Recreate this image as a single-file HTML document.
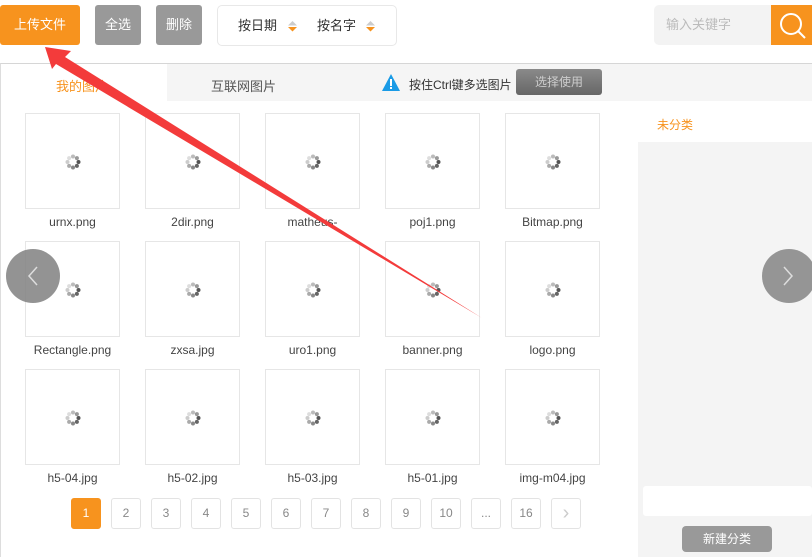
<!DOCTYPE html>
<html><head><meta charset="utf-8"><style>
*{margin:0;padding:0;box-sizing:border-box}
body{width:812px;height:557px;overflow:hidden;background:#fff;font-family:"Liberation Sans","Noto Sans CJK SC",sans-serif;position:relative;font-size:13px;color:#333}
.a{position:absolute}
.btn{position:absolute;top:5px;height:40px;border-radius:3px;color:#fff;font-size:13px;line-height:40px;text-align:center}
.box{position:absolute;width:95px;height:96px;border:1px solid #e6e6e6}
.lbl{position:absolute;width:95px;text-align:center;font-size:12px;color:#444}
.sp{position:absolute;left:39px;top:40px;width:16px;height:16px}
.pg{position:absolute;top:498px;width:30px;height:31px;border:1px solid #e3e3e3;border-radius:3px;text-align:center;line-height:29px;font-size:12px;color:#888}
</style></head><body>
<div class="btn" style="left:0;width:80px;background:#f7931e">上传文件</div>
<div class="btn" style="left:95px;width:46px;background:#999">全选</div>
<div class="btn" style="left:156px;width:46px;background:#999">删除</div>
<div class="a" style="left:217px;top:5px;width:180px;height:41px;border:1px solid #e8e8e8;border-radius:5px;font-size:13px;line-height:40px;color:#333">
<span class="a" style="left:20px">按日期</span>
<svg class="a" style="left:70px;top:15px" width="9" height="11"><polygon points="4.5,0 9,4.5 0,4.5" fill="#ccc"/><polygon points="0,6 9,6 4.5,10.5" fill="#f7931e"/></svg>
<span class="a" style="left:99px">按名字</span>
<svg class="a" style="left:148px;top:15px" width="9" height="11"><polygon points="4.5,0 9,4.5 0,4.5" fill="#ccc"/><polygon points="0,6 9,6 4.5,10.5" fill="#f7931e"/></svg></div>
<div class="a" style="left:654px;top:5px;width:118px;height:40px;background:#f3f3f3;border-radius:5px 0 0 5px;color:#bbb;line-height:40px;padding-left:12px">输入关键字</div>
<div class="a" style="left:771px;top:5px;width:41px;height:40px;background:#f7931e">
<svg width="41" height="40"><circle cx="20" cy="19" r="10" fill="none" stroke="#fff" stroke-width="2"/><line x1="27" y1="26" x2="34" y2="33" stroke="#fff" stroke-width="2"/></svg></div>
<div class="a" style="left:0;top:63px;width:812px;height:494px;border-top:1px solid #d6d6d6;border-left:1px solid #ddd"></div>
<div class="a" style="left:167px;top:64px;width:645px;height:37px;background:#f5f5f5"></div>
<div class="a" style="left:56px;top:76px;color:#f7931e">我的图片</div>
<div class="a" style="left:211px;top:76px;color:#555">互联网图片</div>
<svg class="a" style="left:381px;top:73px" width="20" height="20"><polygon points="10,1 19,18 1,18" fill="#1a9be6"/><rect x="9" y="6" width="2" height="7" fill="#fff"/><rect x="9" y="14" width="2" height="2" fill="#fff"/></svg>
<div class="a" style="left:409px;top:76px;font-size:12px;color:#333">按住Ctrl键多选图片</div>
<div class="a" style="left:516px;top:69px;width:86px;height:26px;background:linear-gradient(#8a8a8a,#666);border-radius:3px;color:#ccc;text-align:center;line-height:26px;font-size:12px">选择使用</div>
<div class="a" style="left:657px;top:116px;color:#f7931e;font-size:12px">未分类</div>
<div class="a" style="left:638px;top:142px;width:174px;height:415px;background:#f4f4f4"></div>
<div class="a" style="left:643px;top:486px;width:169px;height:30px;background:#fff;border-radius:3px"></div>
<div class="a" style="left:682px;top:526px;width:90px;height:26px;background:#999;border-radius:4px;color:#fff;text-align:center;line-height:26px;font-size:12px">新建分类</div>
<div id="g"></div>
<div class="a" style="left:6px;top:249px;width:54px;height:54px;border-radius:50%;background:rgba(128,128,128,.85)"><svg width="54" height="54"><polyline points="31,18 23,27 31,36" fill="none" stroke="#ddd" stroke-width="1.5"/></svg></div>
<div class="a" style="left:762px;top:249px;width:54px;height:54px;border-radius:50%;background:#959595"><svg width="54" height="54"><polyline points="22,18 30,27 22,36" fill="none" stroke="#ddd" stroke-width="1.5"/></svg></div>
<svg class="a" style="left:0;top:0" width="812" height="557"><polygon points="45,47 71,51 65,57 482,318 56,64 52,69" fill="#f33b3b"/></svg>
<script>
var names=[["urnx.png","2dir.png","matheus-","poj1.png","Bitmap.png"],["Rectangle.png","zxsa.jpg","uro1.png","banner.png","logo.png"],["h5-04.jpg","h5-02.jpg","h5-03.jpg","h5-01.jpg","img-m04.jpg"]];
var h="",sp='<svg class="sp" viewBox="0 0 16 16">';
for(var k=0;k<8;k++){var an=k*Math.PI/4,c=["#555","#666","#888","#aaa","#ccc","#ddd","#bbb","#999"][k];sp+='<circle cx="'+(8+5.5*Math.cos(an))+'" cy="'+(8+5.5*Math.sin(an))+'" r="2" fill="'+c+'"/>';}
sp+='</svg>';
for(var r=0;r<3;r++)for(var c=0;c<5;c++){var x=25+c*120,y=113+r*128;h+='<div class="box" style="left:'+x+'px;top:'+y+'px">'+sp+'</div><div class="lbl" style="left:'+x+'px;top:'+(y+102)+'px">'+names[r][c]+'</div>';}
var p=["1","2","3","4","5","6","7","8","9","10","...","16","›"];
for(var i=0;i<13;i++){h+='<div class="pg" style="left:'+(71+i*40)+'px;'+(i==0?'background:#f7931e;border-color:#f7931e;color:#fff':'')+(i==12?';font-size:20px;color:#ccc':'')+'">'+p[i]+'</div>';}
document.getElementById("g").innerHTML=h;
</script>
</body></html>
